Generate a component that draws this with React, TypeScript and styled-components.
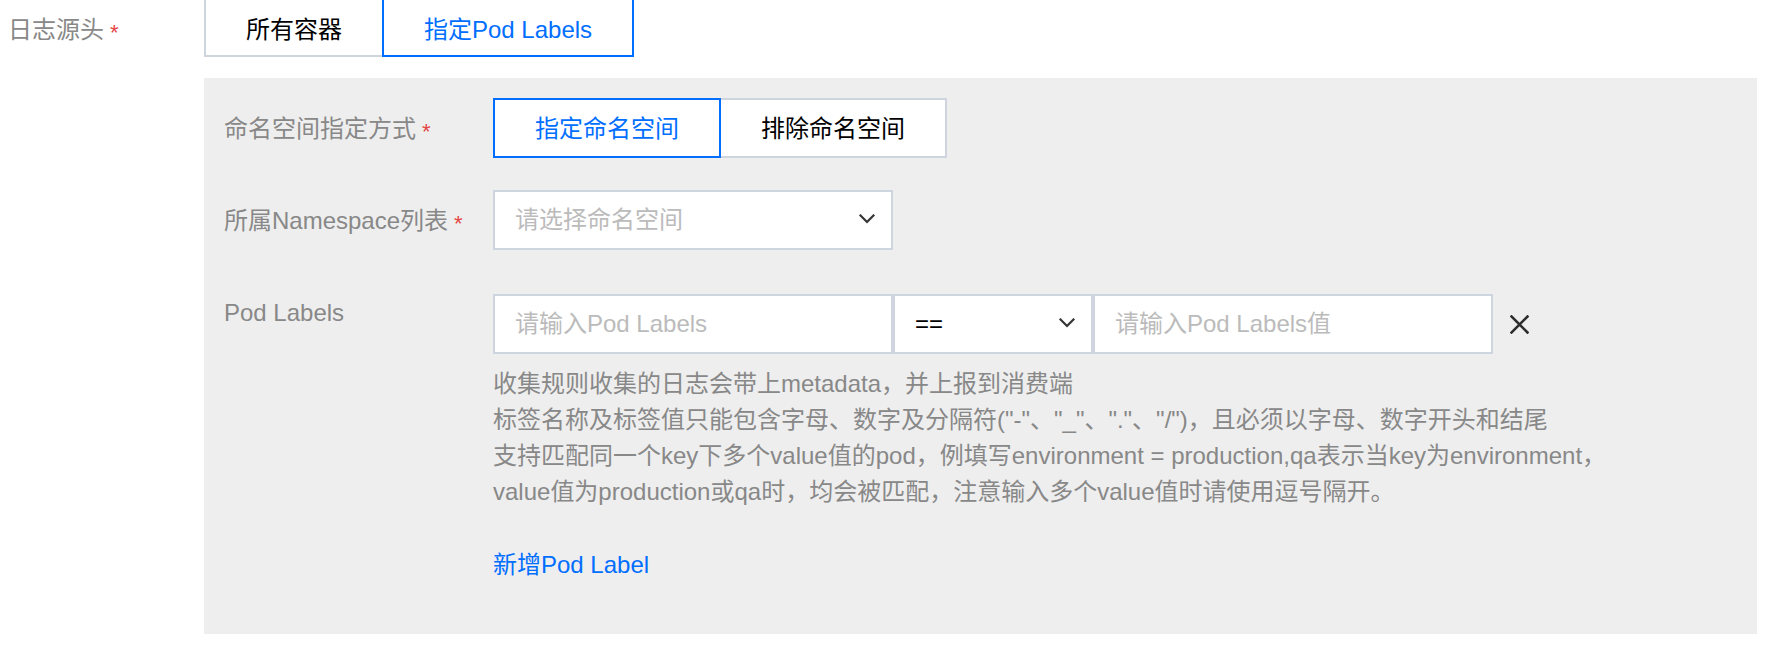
import React from "react";
import styled, { createGlobalStyle } from "styled-components";

const GlobalStyle = createGlobalStyle`
  html, body {
    margin: 0;
    padding: 0;
    background: #ffffff;
  }
  body {
    font-family: "Liberation Sans", "Noto Sans CJK SC", sans-serif;
    font-size: 24px;
    line-height: 36px;
    color: #000000;
  }
  *, *::before, *::after {
    box-sizing: border-box;
  }
`;

const Page = styled.div`
  margin-top: -3px;
  padding: 0 31px 0 8px;
`;

const FormRow = styled.div`
  display: flex;
  align-items: flex-start;
`;

const OuterLabel = styled.div`
  width: 196px;
  flex: none;
  padding-top: 15px;
  color: #888888;
  white-space: nowrap;
`;

const Required = styled.span`
  color: #e54545;
  margin-left: 6px;
  font-size: 22px;
  vertical-align: -2px;
`;

const Controls = styled.div`
  flex: 1;
  min-width: 0;
`;

const SegGroup = styled.div`
  display: flex;
`;

const SegButton = styled.button<{ $active?: boolean; $shift?: number }>`
  position: relative;
  z-index: ${(p) => (p.$active ? 1 : 0)};
  height: 60px;
  padding: ${(p) => (p.$shift ?? 1) * 2}px 40px 0;
  margin: 0;
  border: 2px solid ${(p) => (p.$active ? "#006eff" : "#cfd5de")};
  background: #ffffff;
  color: ${(p) => (p.$active ? "#006eff" : "#000000")};
  font: inherit;
  line-height: 36px;
  white-space: nowrap;
  cursor: pointer;
  & + & {
    margin-left: -2px;
  }
`;

const Panel = styled.div`
  margin-top: 21px;
  background: #eeeeee;
  padding: 20px 0 51px 20px;
`;

const PanelRow = styled.div`
  display: flex;
  align-items: flex-start;
  & + & {
    margin-top: 32px;
  }
`;

const PanelLabel = styled.div`
  width: 269px;
  flex: none;
  padding-top: 13px;
  color: #888888;
  white-space: nowrap;
`;

const SelectBox = styled.div<{ $width: number }>`
  width: ${(p) => p.$width}px;
  height: 60px;
  flex: none;
  border: 2px solid #cfd5de;
  background: #ffffff;
  display: flex;
  align-items: center;
  justify-content: space-between;
  padding: 0 16px 0 20px;
  cursor: pointer;
`;

const SelectText = styled.span<{ $placeholder?: boolean }>`
  color: ${(p) => (p.$placeholder ? "#bbbbbb" : "#000000")};
  white-space: nowrap;
`;

const Chevron = styled.svg`
  width: 16px;
  height: 10px;
  flex: none;
  margin-top: -3px;
`;

const LabelsBlock = styled.div`
  padding-top: 12px;
`;

const LabelInputs = styled.div`
  display: flex;
  align-items: center;
`;

const TextInput = styled.input`
  width: 400px;
  height: 60px;
  flex: none;
  border: 2px solid #cfd5de;
  border-radius: 0;
  background: #ffffff;
  padding: 0 20px;
  margin: 0;
  font: inherit;
  color: #000000;
  outline: none;
  &::placeholder {
    color: #bbbbbb;
  }
`;

const RemoveButton = styled.span`
  margin-left: 17px;
  display: flex;
  align-items: center;
  cursor: pointer;
`;

const Help = styled.div`
  margin-top: 12px;
  color: #888888;
`;

const HelpLine = styled.div`
  white-space: nowrap;
`;

const AddLink = styled.a`
  display: inline-block;
  margin-top: 37px;
  color: #006eff;
  text-decoration: none;
  cursor: pointer;
`;

const ChevronIcon = () => (
  <Chevron viewBox="0 0 16 10" fill="none">
    <polyline
      points="1.5,1.5 8,8 14.5,1.5"
      stroke="#333333"
      strokeWidth="2.2"
      strokeLinecap="square"
    />
  </Chevron>
);

const CloseIcon = () => (
  <svg width="19" height="19" viewBox="0 0 19 19" fill="none">
    <path
      d="M1.5 1.5 L17.5 17.5 M17.5 1.5 L1.5 17.5"
      stroke="#2d2d2d"
      strokeWidth="2.6"
      strokeLinecap="square"
    />
  </svg>
);

export default function App() {
  return (
    <>
      <GlobalStyle />
      <Page>
        <FormRow>
          <OuterLabel>
            日志源头<Required>*</Required>
          </OuterLabel>
          <Controls>
            <SegGroup>
              <SegButton $shift={3}>所有容器</SegButton>
              <SegButton $shift={3} $active>
                指定Pod Labels
              </SegButton>
            </SegGroup>
            <Panel>
              <PanelRow>
                <PanelLabel>
                  命名空间指定方式<Required>*</Required>
                </PanelLabel>
                <SegGroup>
                  <SegButton $active>指定命名空间</SegButton>
                  <SegButton>排除命名空间</SegButton>
                </SegGroup>
              </PanelRow>
              <PanelRow>
                <PanelLabel>
                  所属Namespace列表<Required>*</Required>
                </PanelLabel>
                <SelectBox $width={400}>
                  <SelectText $placeholder>请选择命名空间</SelectText>
                  <ChevronIcon />
                </SelectBox>
              </PanelRow>
              <PanelRow>
                <PanelLabel>Pod Labels</PanelLabel>
                <LabelsBlock>
                  <LabelInputs>
                    <TextInput placeholder="请输入Pod Labels" />
                    <SelectBox $width={200}>
                      <SelectText>==</SelectText>
                      <ChevronIcon />
                    </SelectBox>
                    <TextInput placeholder="请输入Pod Labels值" />
                    <RemoveButton>
                      <CloseIcon />
                    </RemoveButton>
                  </LabelInputs>
                  <Help>
                    <HelpLine>收集规则收集的日志会带上metadata，并上报到消费端</HelpLine>
                    <HelpLine>
                      标签名称及标签值只能包含字母、数字及分隔符("-"、"_"、"."、"/")，且必须以字母、数字开头和结尾
                    </HelpLine>
                    <HelpLine>
                      支持匹配同一个key下多个value值的pod，例填写environment = production,qa表示当key为environment，
                    </HelpLine>
                    <HelpLine>
                      value值为production或qa时，均会被匹配，注意输入多个value值时请使用逗号隔开。
                    </HelpLine>
                  </Help>
                  <AddLink>新增Pod Label</AddLink>
                </LabelsBlock>
              </PanelRow>
            </Panel>
          </Controls>
        </FormRow>
      </Page>
    </>
  );
}
